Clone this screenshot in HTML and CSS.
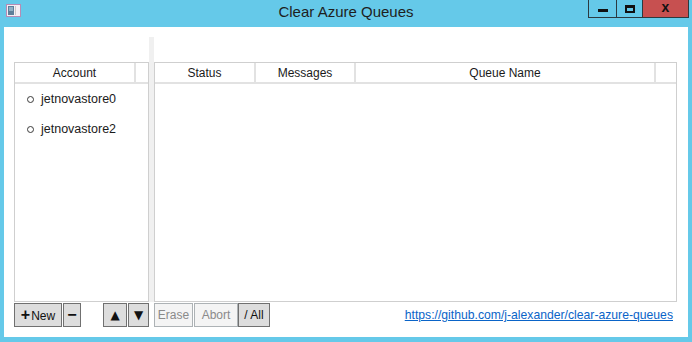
FILE: index.html
```html
<!DOCTYPE html>
<html lang="en">
  <head>
    <meta charset="UTF-8" />
    <title>Clear Azure Queues</title>
    <link rel="stylesheet" href="styles.css">
  </head>
  <body>
    <div class="window">
      <div class="titlebar">
        <div class="app_icon">
          <svg width="15" height="13" viewBox="0 0 15 13">
            <rect x="0.5" y="0.5" width="14" height="12" fill="#f4eef4" stroke="#b58cb5" />
            <rect x="2" y="2" width="6" height="9" fill="#5d7f9a" />
            <rect x="3" y="3" width="4" height="4" fill="#8fb0c6" />
            <rect x="9" y="2" width="1" height="9" fill="#c9c9c9" />
          </svg>
        </div>
        <div class="title">Clear Azure Queues</div>
        <div class="win_buttons">
          <div class="wbtn min"><span class="min_bar"></span></div>
          <div class="wbtn max"><span class="max_box"></span></div>
          <div class="wbtn close">x</div>
        </div>
      </div>

      <div class="client">
        <div class="panel">
          <div class="grid">
            <div class="grid_head">
              <div class="col account">Account</div>
              <div class="col fill"></div>
            </div>
            <ul class="accounts">
              <li><span class="radio"></span>jetnovastore0</li>
              <li><span class="radio"></span>jetnovastore2</li>
            </ul>
          </div>
        </div>

        <div class="splitter"></div>

        <div class="panel">
          <div class="grid">
            <div class="grid_head">
              <div class="col status">Status</div>
              <div class="col messages">Messages</div>
              <div class="col qname">Queue Name</div>
              <div class="col fill"></div>
            </div>
          </div>
        </div>

        <div class="toolbar left_bar">
          <div class="btn_group">
            <button class="btn new"><b>+</b>New</button>
            <button class="btn minus">&minus;</button>
          </div>
          <div class="btn_group">
            <button class="btn arrow">&#9650;</button>
            <button class="btn arrow down">&#9660;</button>
          </div>
        </div>

        <div></div>

        <div class="toolbar right_bar">
          <div class="btn_group tight">
            <button class="btn off erase">Erase</button>
            <button class="btn off abort">Abort</button>
            <button class="btn all">/ All</button>
          </div>
          <a class="repo" href="#">https://github.com/j-alexander/clear-azure-queues</a>
        </div>
      </div>
    </div>
  </body>
</html>
```

FILE: styles.css
```css
* {
    margin: 0;
    padding: 0;
    box-sizing: border-box;
}

body {
    background: #65c9e9;
    font-family: "Liberation Sans", Arial, sans-serif;
    font-size: 12px;
    color: #1a1a1a;
}

.window {
    width: 692px;
    height: 342px;
    display: flex;
    flex-direction: column;
    background: #65c9e9;
}

.titlebar {
    height: 27px;
    display: grid;
    grid-template-columns: 1fr auto 1fr;
}

.app_icon {
    padding: 4px 0 0 6px;
}

.title {
    font-size: 15px;
    line-height: 24px;
    color: #1e1e1e;
}

.win_buttons {
    display: flex;
    justify-content: flex-end;
    align-items: flex-start;
    padding-right: 3px;
}

.wbtn {
    height: 18px;
    border: 1px solid #2b3a40;
    border-top: none;
    display: flex;
    align-items: center;
    justify-content: center;
}

.wbtn.min {
    width: 29px;
}

.wbtn.max {
    width: 26px;
    border-left: none;
}

.wbtn.close {
    width: 46px;
    border-left: none;
    background: #c75050;
    color: #111;
    font-size: 14px;
    font-weight: bold;
    line-height: 14px;
    padding-bottom: 3px;
}

.min_bar {
    width: 10px;
    height: 3px;
    margin-top: 4px;
    background: #111;
}

.max_box {
    width: 10px;
    height: 8px;
    border: 2px solid #111;
    border-top-width: 3px;
}

.client {
    flex: 1;
    margin: 0 4px 5px 4px;
    background: white;
    padding: 10px 11px 10px 10px;
    display: grid;
    grid-template-columns: 135px 5px 1fr;
    grid-template-rows: 1fr 25px;
}

.panel {
    padding-top: 25px;
    display: flex;
}

.grid {
    flex: 1;
    border: 1px solid #cfcfcf;
    display: flex;
    flex-direction: column;
}

.splitter {
    background: #f0f0f0;
}

.grid_head {
    height: 21px;
    display: flex;
    border-bottom: 2px solid #e2e2e2;
}

.grid_head .col {
    text-align: center;
    line-height: 20px;
    border-right: 2px solid #e2e2e2;
}

.grid_head .col.fill {
    flex: 1;
    border-right: none;
}

.col.account {
    width: 121px;
}

.col.status {
    width: 101px;
}

.col.messages {
    width: 100px;
}

.col.qname {
    width: 300px;
}

.accounts {
    list-style: none;
}

.accounts li {
    height: 30px;
    display: flex;
    align-items: center;
    padding-left: 12px;
    font-size: 12.5px;
}

.radio {
    width: 7px;
    height: 7px;
    border: 1px solid #3a3a3a;
    border-radius: 50%;
    margin-right: 7px;
}

.toolbar {
    padding-top: 1px;
    display: flex;
    justify-content: space-between;
    align-items: stretch;
}

.btn_group {
    display: flex;
    gap: 1px;
}

.btn_group.tight {
    gap: 0;
}

.btn {
    height: 24px;
    background: #dddddd;
    border: 1px solid #707070;
    font-family: "Liberation Sans", Arial, sans-serif;
    font-size: 12px;
    color: #111;
}

.btn.new {
    width: 48px;
}

.btn.new b {
    font-size: 16px;
    margin-right: 1px;
}

.btn.minus {
    width: 18px;
    font-size: 16px;
    font-weight: bold;
}

.btn.arrow {
    width: 24px;
    font-family: "DejaVu Sans", sans-serif;
    font-size: 12px;
}

.btn.arrow.down {
    width: 21px;
}

.btn.off {
    background: #f4f4f4;
    border-color: #adb2b5;
    color: #8a8a8a;
}

.btn.erase {
    width: 39px;
    margin-right: 1px;
}

.btn.abort {
    width: 44px;
}

.btn.all {
    width: 32px;
}

.repo {
    align-self: center;
    margin-right: 4px;
    color: #0a64c8;
    font-size: 12.2px;
}
```
